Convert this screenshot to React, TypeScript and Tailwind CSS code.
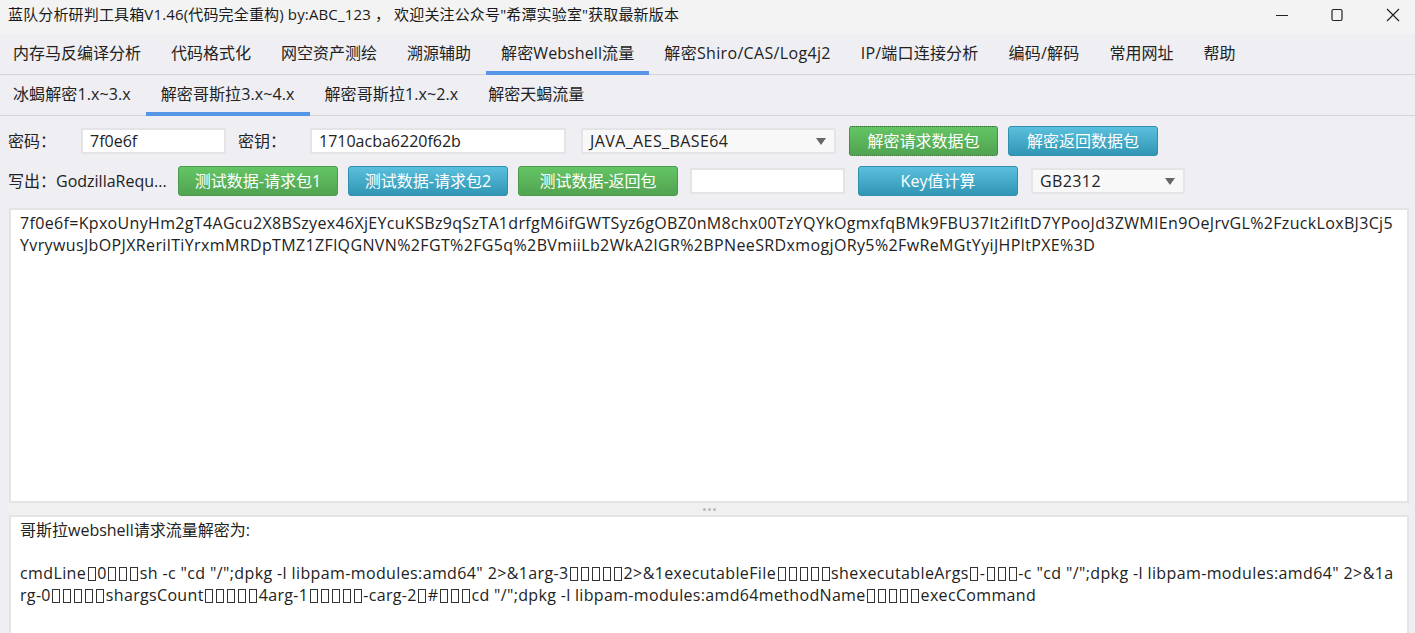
const mainTabs = [
  { label: '内存马反编译分析', track: '' },
  { label: '代码格式化', track: '' },
  { label: '网空资产测绘', track: '' },
  { label: '溯源辅助', track: '' },
  { label: '解密Webshell流量', track: 'tracking-[0.1px]' },
  { label: '解密Shiro/CAS/Log4j2', track: 'tracking-[0.33px]' },
  { label: 'IP/端口连接分析', track: 'tracking-[0.2px]' },
  { label: '编码/解码', track: 'tracking-[0.2px]' },
  { label: '常用网址', track: '' },
  { label: '帮助', track: '' },
];
const subTabs = [
  { label: '冰蝎解密1.x~3.x', track: 'tracking-[0.1px]' },
  { label: '解密哥斯拉3.x~4.x', track: 'tracking-[0.1px]' },
  { label: '解密哥斯拉1.x~2.x', track: 'tracking-[0.1px]' },
  { label: '解密天蝎流量', track: '' },
];

const GREEN = 'border border-[#4b9a4b] bg-gradient-to-b from-[#64c564] to-[#51a351]';
const GREEN_FOCUS = 'border border-dotted border-[#2f6f2f] bg-gradient-to-b from-[#64c564] to-[#51a351]';
const BLUE = 'border border-[#2f8fad] bg-gradient-to-b from-[#5bc0de] to-[#2f96b4]';

function Tabs({ items, active }: { items: { label: string; track: string }[]; active: number }) {
  return (
    <div className="flex h-[41px] border-b border-b-[#d4d4d6] bg-[#eeeef3]">
      <div className="-ml-[2px] flex">
        {items.map((t, i) => (
          <div
            key={t.label}
            className={`flex h-[41px] items-center whitespace-nowrap border-b-[4px] px-[15px] pt-[1px] text-[16px] text-[#222] ${t.track} ${i === active ? 'border-b-[#5596e6]' : 'border-b-transparent'}`}
          >
            {t.label}
          </div>
        ))}
      </div>
    </div>
  );
}

function Btn({ tone, width, children }: { tone: string; width: string; children: string }) {
  return (
    <div className={`flex h-[30px] shrink-0 items-center justify-center rounded-[3px] text-[16px] text-white ${tone} ${width}`}>
      {children}
    </div>
  );
}

function Field({ width, children }: { width: string; children?: string }) {
  return (
    <div className={`flex h-[26px] shrink-0 items-center border-2 border-[#e4e4e6] bg-white pb-[1px] pl-[7px] text-[16px] text-[#222] ${width}`}>
      {children}
    </div>
  );
}

function Select({ width, children }: { width: string; children: string }) {
  return (
    <div className={`flex h-[26px] shrink-0 items-center justify-between rounded-[2px] border-2 border-[#e4e4e6] bg-[#f8f8f8] pl-[7px] pr-[8px] text-[16px] tracking-[0.4px] text-[#222] ${width}`}>
      {children}
      <span className="h-0 w-0 border-x-[5px] border-t-[7px] border-x-transparent border-t-[#666]" />
    </div>
  );
}

// the original shows missing-glyph boxes here, so each ▯ in the string becomes a box
function Garbled({ text, track }: { text: string; track: string }) {
  return (
    <div className={`h-[21.7px] ${track}`}>
      {text.split(/(▯)/).map((part, i) =>
        part === '▯' ? (
          <span key={i} className="mx-[1.5px] inline-block h-[14px] w-[8px] border border-[#333] align-[-2px]" />
        ) : (
          part
        ),
      )}
    </div>
  );
}

export default function App() {
  return (
    <div className="flex h-[633px] w-[1415px] flex-col overflow-hidden bg-[#eeeef3] font-['Open_Sans','Noto_Sans_CJK_SC',sans-serif]">
      {/* Title bar */}
      <div className="flex h-[34px] shrink-0 items-center justify-between bg-[#f3f3f3] pb-[5px] pl-[8px] text-[15px] tracking-[0.15px] text-[#1a1a1a]">
        <span className="whitespace-nowrap">蓝队分析研判工具箱V1.46(代码完全重构) by:ABC_123 ， 欢迎关注公众号"希潭实验室"获取最新版本</span>
        <div className="flex items-center gap-[43px] pr-[15px]">
          <svg width="12" height="12" viewBox="0 0 12 12" fill="none" stroke="#222" strokeWidth="1"><path d="M0 6.5h12" /></svg>
          <svg width="12" height="14" viewBox="0 0 12 14" fill="none" stroke="#222" strokeWidth="1.2"><rect x="1" y="1.5" width="10" height="11" rx="1.5" /></svg>
          <svg width="14" height="14" viewBox="0 0 14 14" fill="none" stroke="#222" strokeWidth="1.2"><path d="M1 1l12 12M13 1L1 13" /></svg>
        </div>
      </div>

      <Tabs items={mainTabs} active={4} />
      <Tabs items={subTabs} active={1} />

      {/* Form rows */}
      <div className="flex flex-col gap-[10px] pt-[10px]">
        <div className="flex h-[30px] items-center pl-[8px] text-[16px] text-[#222]">
          <span className="w-[73px]">密码：</span>
          <Field width="w-[145px]">7f0e6f</Field>
          <span className="ml-[12px] w-[72px]">密钥：</span>
          <Field width="w-[256px]">1710acba6220f62b</Field>
          <div className="ml-[15px]"><Select width="w-[255px]">JAVA_AES_BASE64</Select></div>
          <div className="ml-[13px] flex gap-[10px]">
            <Btn tone={GREEN_FOCUS} width="w-[149px]">解密请求数据包</Btn>
            <Btn tone={BLUE} width="w-[150px]">解密返回数据包</Btn>
          </div>
        </div>
        <div className="flex h-[30px] items-center pl-[8px] text-[16px] text-[#222]">
          <span className="w-[48px]">写出：</span>
          <span className="w-[122px] whitespace-nowrap">GodzillaRequ...</span>
          <div className="flex gap-[10px]">
            <Btn tone={GREEN} width="w-[160px]">测试数据-请求包1</Btn>
            <Btn tone={BLUE} width="w-[160px]">测试数据-请求包2</Btn>
            <Btn tone={GREEN} width="w-[160px]">测试数据-返回包</Btn>
          </div>
          <div className="ml-[12px]"><Field width="w-[155px]" /></div>
          <div className="ml-[13px]"><Btn tone={BLUE} width="w-[160px]">Key值计算</Btn></div>
          <div className="ml-[13px]"><Select width="w-[154px]">GB2312</Select></div>
        </div>
      </div>

      {/* Text areas */}
      <div className="mt-[12px] flex min-h-0 flex-1 flex-col pl-[9px] pr-[6px]">
        <div className="h-[295px] shrink-0 whitespace-nowrap border-2 border-[#e4e4e4] bg-white px-[9px] pt-[3px] text-[16px] leading-[21.5px] tracking-[0.33px] text-[#222]">
          <div>7f0e6f=KpxoUnyHm2gT4AGcu2X8BSzyex46XjEYcuKSBz9qSzTA1drfgM6ifGWTSyz6gOBZ0nM8chx00TzYQYkOgmxfqBMk9FBU37It2ifltD7YPooJd3ZWMIEn9OeJrvGL%2FzuckLoxBJ3Cj5</div>
          <div className="tracking-[0.37px]">YvrywusJbOPJXRerilTiYrxmMRDpTMZ1ZFlQGNVN%2FGT%2FG5q%2BVmiiLb2WkA2lGR%2BPNeeSRDxmogjORy5%2FwReMGtYyiJHPltPXE%3D</div>
        </div>
        <div className="flex h-[12px] shrink-0 items-center justify-center gap-[2px] bg-[#f0f0f0]">
          <span className="size-[3px] rounded-full bg-[#b8b8b8]" />
          <span className="size-[3px] rounded-full bg-[#b8b8b8]" />
          <span className="size-[3px] rounded-full bg-[#b8b8b8]" />
        </div>
        <div className="min-h-0 flex-1 whitespace-nowrap border-2 border-b-0 border-[#e4e4e4] bg-white px-[9px] pt-[3px] text-[16px] leading-[21.7px] text-[#222]">
          <div>哥斯拉webshell请求流量解密为:</div>
          <div className="h-[21.7px]" />
          <Garbled track="tracking-[0.38px]" text={'cmdLine▯0▯▯▯sh -c "cd "/";dpkg -l libpam-modules:amd64" 2>&1arg-3▯▯▯▯▯2>&1executableFile▯▯▯▯▯shexecutableArgs▯-▯▯▯-c "cd "/";dpkg -l libpam-modules:amd64" 2>&1a'} />
          <Garbled track="tracking-[0.33px]" text={'rg-0▯▯▯▯▯shargsCount▯▯▯▯▯4arg-1▯▯▯▯▯-carg-2▯#▯▯▯cd "/";dpkg -l libpam-modules:amd64methodName▯▯▯▯▯execCommand'} />
        </div>
      </div>
    </div>
  );
}
